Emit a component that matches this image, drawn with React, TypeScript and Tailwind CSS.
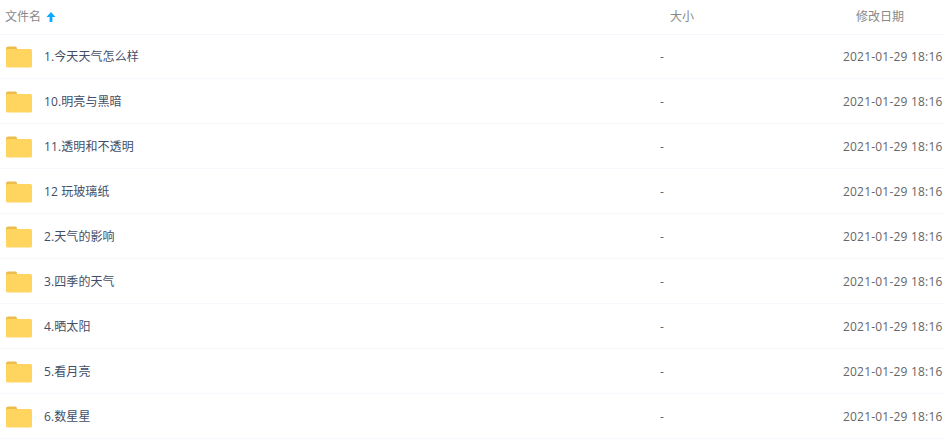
import React from 'react';

const rows = [
	'1.今天天气怎么样',
	'10.明亮与黑暗',
	'11.透明和不透明',
	'12 玩玻璃纸',
	'2.天气的影响',
	'3.四季的天气',
	'4.晒太阳',
	'5.看月亮',
	'6.数星星',
];

function FolderIcon() {
	return (
		<svg width="26" height="22" viewBox="0 0 26 22" className="shrink-0">
			<path d="M0 2.500A2 2 0 0 1 2 .5h7a2 2 0 0 1 2 1.600L11.500 5H0z" fill="#eebb4d" />
			<rect x="0" y="3" width="26" height="18.500" rx="1.500" fill="#ffd45f" />
		</svg>
	);
}

function App() {
	return (
		<div className="w-[945px] h-[439px] overflow-hidden bg-white text-xs font-['Open_Sans','Noto_Sans_CJK_SC',sans-serif]">
			<div className="flex h-[34.5px] items-center border-b border-[#f2f6fd] text-[#888888]">
				<div className="w-[660px] pl-[5px] flex items-center">
					<span>文件名</span>
					<svg width="12" height="12" viewBox="0 0 12 12" className="ml-[4px]">
						<path d="M6 1 10.500 6H7.400V11H4.600V6H1.500z" fill="#09aaff" />
					</svg>
				</div>
				<div className="w-[196px] pl-[10px]">大小</div>
				<div>修改日期</div>
			</div>
			{rows.map((name) => (
				<div key={name} className="flex h-[44.9px] pt-[2px] items-center border-b border-[#f5f8fd]">
					<div className="w-[660px] pl-[6px] flex items-center">
						<FolderIcon />
						<span className="ml-[12px] text-[#424e67] tracking-[0.1px]">{name}</span>
					</div>
					<div className="w-[183px] text-[#666666]">-</div>
					<div className="text-[#666666] whitespace-nowrap tracking-[0.2px]">2021-01-29 18:16</div>
				</div>
			))}
		</div>
	);
}
export default App;
